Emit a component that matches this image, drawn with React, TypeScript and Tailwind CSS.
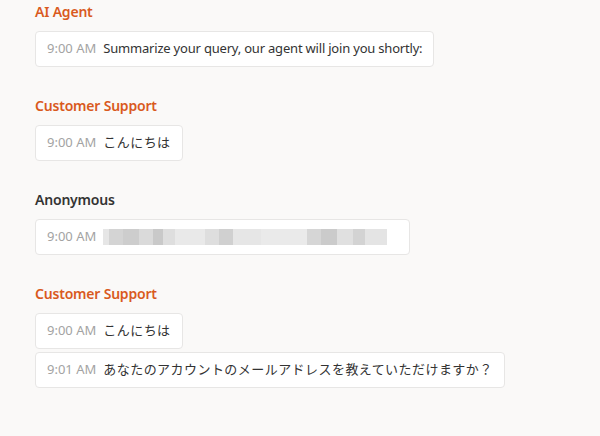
import React from "react";

type Msg = { time: string; text?: string; ja?: boolean; redacted?: boolean };
type Group = { author: string; staff: boolean; messages: Msg[] };

const groups: Group[] = [
  {
    author: "AI Agent",
    staff: true,
    messages: [{ time: "9:00 AM", text: "Summarize your query, our agent will join you shortly:" }],
  },
  { author: "Customer Support", staff: true, messages: [{ time: "9:00 AM", text: "こんにちは", ja: true }] },
  { author: "Anonymous", staff: false, messages: [{ time: "9:00 AM", redacted: true }] },
  {
    author: "Customer Support",
    staff: true,
    messages: [
      { time: "9:00 AM", text: "こんにちは", ja: true },
      { time: "9:01 AM", text: "あなたのアカウントのメールアドレスを教えていただけますか？", ja: true },
    ],
  },
];

// pixelated blur blocks standing in for the hidden e-mail
const blocks = [
  ["w-[6px]", "bg-[#e6e6e6]"],
  ["w-[14px]", "bg-[#d4d4d4]"],
  ["w-[16px]", "bg-[#cdcdcd]"],
  ["w-[14px]", "bg-[#dadada]"],
  ["w-[10px]", "bg-[#c9c9c9]"],
  ["w-[12px]", "bg-[#dedede]"],
  ["w-[30px]", "bg-[#e9e9e9]"],
  ["w-[14px]", "bg-[#dedede]"],
  ["w-[14px]", "bg-[#d0d0d0]"],
  ["w-[28px]", "bg-[#e6e6e6]"],
  ["w-[46px]", "bg-[#eaeaea]"],
  ["w-[14px]", "bg-[#d6d6d6]"],
  ["w-[16px]", "bg-[#cbcbcb]"],
  ["w-[16px]", "bg-[#e0e0e0]"],
  ["w-[12px]", "bg-[#d3d3d3]"],
  ["w-[22px]", "bg-[#e4e4e4]"],
];

function Bubble({ m }: { m: Msg }) {
  return (
    <div className="flex h-9 w-fit items-center rounded-[4px] border border-[#e7e6e5] bg-white px-[11px] text-[13px]">
      <span className="mr-[7px] text-[#a3a3a3]">{m.time}</span>
      {m.redacted ? (
        <span className="flex h-4 blur-[0.6px]">
          {blocks.map(([w, c], i) => (
            <span key={i} className={`${w} ${c} h-4`} />
          ))}
          <span className="w-[11px]" />
        </span>
      ) : (
        <span className={`text-[#333333] ${m.ja ? "tracking-[0.45px]" : "tracking-[-0.2px]"}`}>{m.text}</span>
      )}
    </div>
  );
}

export default function App() {
  return (
    <div
      className="min-h-[436px] w-[600px] bg-[#faf9f8] px-[35px] pt-[2px]"
      style={{ fontFamily: '"Noto Sans", "Noto Sans CJK JP", sans-serif' }}
    >
      {groups.map((g, i) => (
        <div key={i} className="mb-[29px]">
          <div
            className={`mb-[9px] text-[14px] font-semibold leading-5 tracking-[-0.2px] ${
              g.staff ? "text-[#d95a1e]" : "text-[#333333]"
            }`}
          >
            {g.author}
          </div>
          <div className="flex flex-col gap-[3px]">
            {g.messages.map((m, j) => (
              <Bubble key={j} m={m} />
            ))}
          </div>
        </div>
      ))}
    </div>
  );
}
